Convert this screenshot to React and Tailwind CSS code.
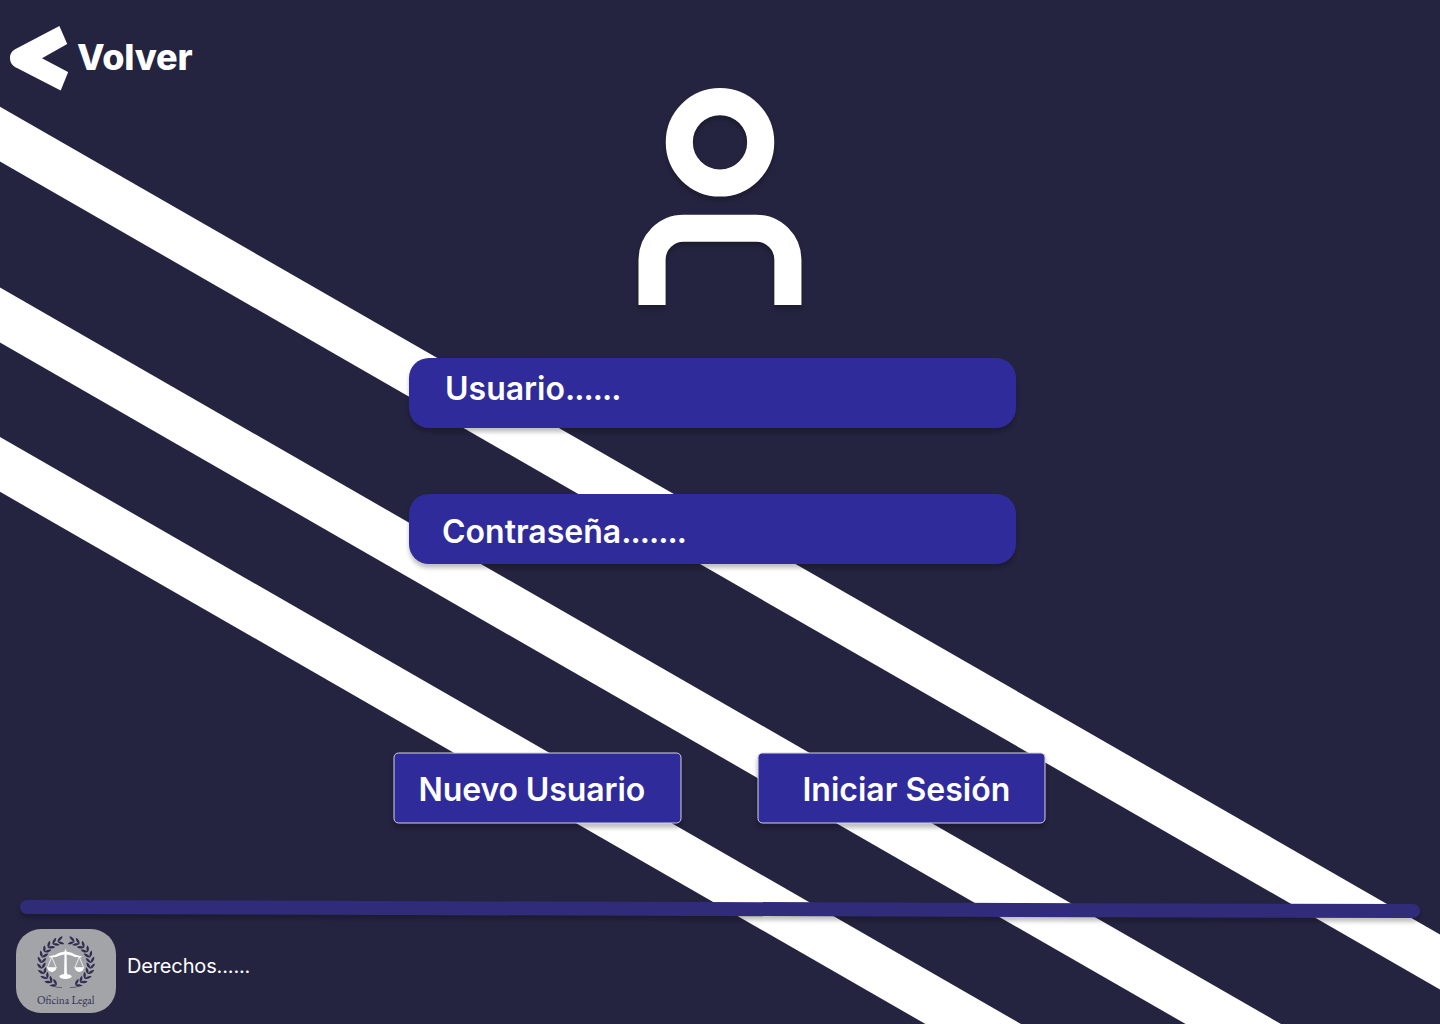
const LEAF_ANGLES = [13, 26, 40, 54, 68, 82, 96, 110, 124, 138, 151];

function LaurelBranch() {
  return (
    <g fill="#302e50">
      <path d="M46 58.6Q41 59 36 56.5" fill="none" stroke="#302e50" strokeWidth="0.6" />
      {LEAF_ANGLES.map((a) => (
        <g key={a} transform={`translate(50 34.4) scale(1 .94) rotate(${-a}) translate(0 -24.6)`}>
          <path d="M-3 .4C-2.8 -2.2 -.3 -4.2 3 -4.3C2.8 -2.2 0 -.2 -3 .4Z" />
          <path d="M-3 -.4C-2.8 2.2 -.3 4.2 3 4.3C2.8 2.2 0 .2 -3 -.4Z" />
        </g>
      ))}
    </g>
  );
}

function Logo() {
  return (
    <div className="relative h-[84px] w-[100px] shrink-0 rounded-[25px] bg-[#a3a4a8]">
      <svg viewBox="0 0 100 84" className="h-full w-full">
        <LaurelBranch />
        <g transform="translate(100 0) scale(-1 1)">
          <LaurelBranch />
        </g>
        <g fill="#fff">
          <path d="M48.6 22.5L49.5 19.5L50.5 22.5Q56 23.4 60 26.1L65.5 27.3V28.4L59 28Q54 25.6 50.6 25.4L50.9 45.5H48.1L48.5 25.4Q45 25.6 40 28L33.2 28.4V27.3L39 26.1Q43 23.4 48.6 22.5Z" />
          <ellipse cx="49.5" cy="47.6" rx="6.1" ry="2.5" />
          <path d="M31 38.3H40.7Q39.5 42.9 35.8 42.9T31 38.3ZM58.4 38.3H68.1Q67 42.9 63.3 42.9T58.4 38.3Z" />
          <path
            d="M35.8 28L31.5 38.5M35.8 28L40.2 38.5M63.3 28L58.9 38.5M63.3 28L67.6 38.5"
            fill="none"
            stroke="#fff"
            strokeWidth="0.8"
          />
        </g>
        <text
          x="21"
          y="75"
          textLength="57.5"
          lengthAdjust="spacingAndGlyphs"
          fill="#302e50"
          fontSize="12.5"
          style={{ fontFamily: '"EB Garamond", "Liberation Serif", serif' }}
        >
          Oficina Legal
        </text>
      </svg>
    </div>
  );
}

function Stripes() {
  return (
    <svg viewBox="0 0 1440 1024" className="absolute inset-0 h-full w-full" fill="#fff">
      <path d="M0 106.7L1440 934.4V989.5L0 161.5Z" />
      <path d="M0 287.5L1440 1115.4V1170.2L0 342.5Z" />
      <path d="M0 437L1440 1264.9V1319.9L0 491.8Z" />
    </svg>
  );
}

function Field({ label, dots, className }) {
  return (
    <div
      className={`h-[70px] w-[607px] rounded-[20px] bg-[#302b9a] text-[32px] leading-10 font-semibold shadow-[0_4px_4px_rgba(0,0,0,0.25)] ${className}`}
    >
      {label}
      <span className="tracking-[-0.95px]">{dots}</span>
    </div>
  );
}

function Button({ children, className }) {
  return (
    <button
      className={`flex h-[71px] w-[288px] -translate-x-[0.5px] -translate-y-[0.5px] rounded-[5px] border border-[#d6d5e2] bg-[#302b9a] pt-4 text-[32px] leading-10 font-semibold whitespace-nowrap shadow-[0_4px_4px_rgba(0,0,0,0.25)] ${className}`}
    >
      {children}
    </button>
  );
}

export default function App() {
  return (
    <div className="relative h-[1024px] w-[1440px] overflow-hidden bg-[#252440] font-['Inter',sans-serif] text-white">
      <Stripes />
      <div className="relative flex h-full flex-col">
        <header className="flex h-[88px] items-start gap-[9px] pt-[26px] pl-[10px]">
          <svg viewBox="0 0 58 65" className="h-[65px] w-[58px] shrink-0" fill="#fff">
            <path d="M49.4 0L57.2 18L32 32.3L58.2 46L50.7 64.5L7 42C2.6 40 0 36.6 0 32C0 27.5 2.5 24.5 6.5 22.6Z" />
          </svg>
          <span className="mt-[9px] text-[36px] leading-[44px] font-extrabold tracking-[-0.2px]">Volver</span>
        </header>

        <svg
          viewBox="0 0 164 217"
          className="ml-[638px] h-[217px] w-[164px] shrink-0 overflow-visible drop-shadow-[0_4px_2px_rgba(0,0,0,0.25)]"
          fill="none"
          stroke="#fff"
          strokeWidth="27.1"
        >
          <circle cx="82" cy="54.3" r="40.7" />
          <path d="M14.05 217V171.9A31.6 31.6 0 0 1 45.7 140.2H118.3A31.6 31.6 0 0 1 149.9 171.9V217" />
        </svg>

        <main className="mt-[53px] flex flex-col">
          <div className="ml-[409px] flex flex-col gap-[66px]">
            <Field className="pt-[11px] pl-9" label="Usuario" dots="......" />
            <Field className="pt-[18px] pl-[33px]" label="Contraseña" dots="......." />
          </div>
          <div className="mt-[189px] ml-[394px] flex gap-[76px]">
            <Button className="pl-6 tracking-[-0.1px]">Nuevo Usuario</Button>
            <Button className="pl-11">Iniciar Sesión</Button>
          </div>
        </main>

        <footer className="mt-[78px] flex flex-col pl-4">
          <div className="ml-1 h-[14px] w-[1400px] rotate-[0.17deg] rounded-full bg-[#302c79] shadow-[0_4px_4px_rgba(0,0,0,0.25)]" />
          <div className="mt-[13px] flex gap-[11px]">
            <Logo />
            <span className="mt-[25px] text-xl leading-6 tracking-[-0.15px]">Derechos......</span>
          </div>
        </footer>
      </div>
    </div>
  );
}
